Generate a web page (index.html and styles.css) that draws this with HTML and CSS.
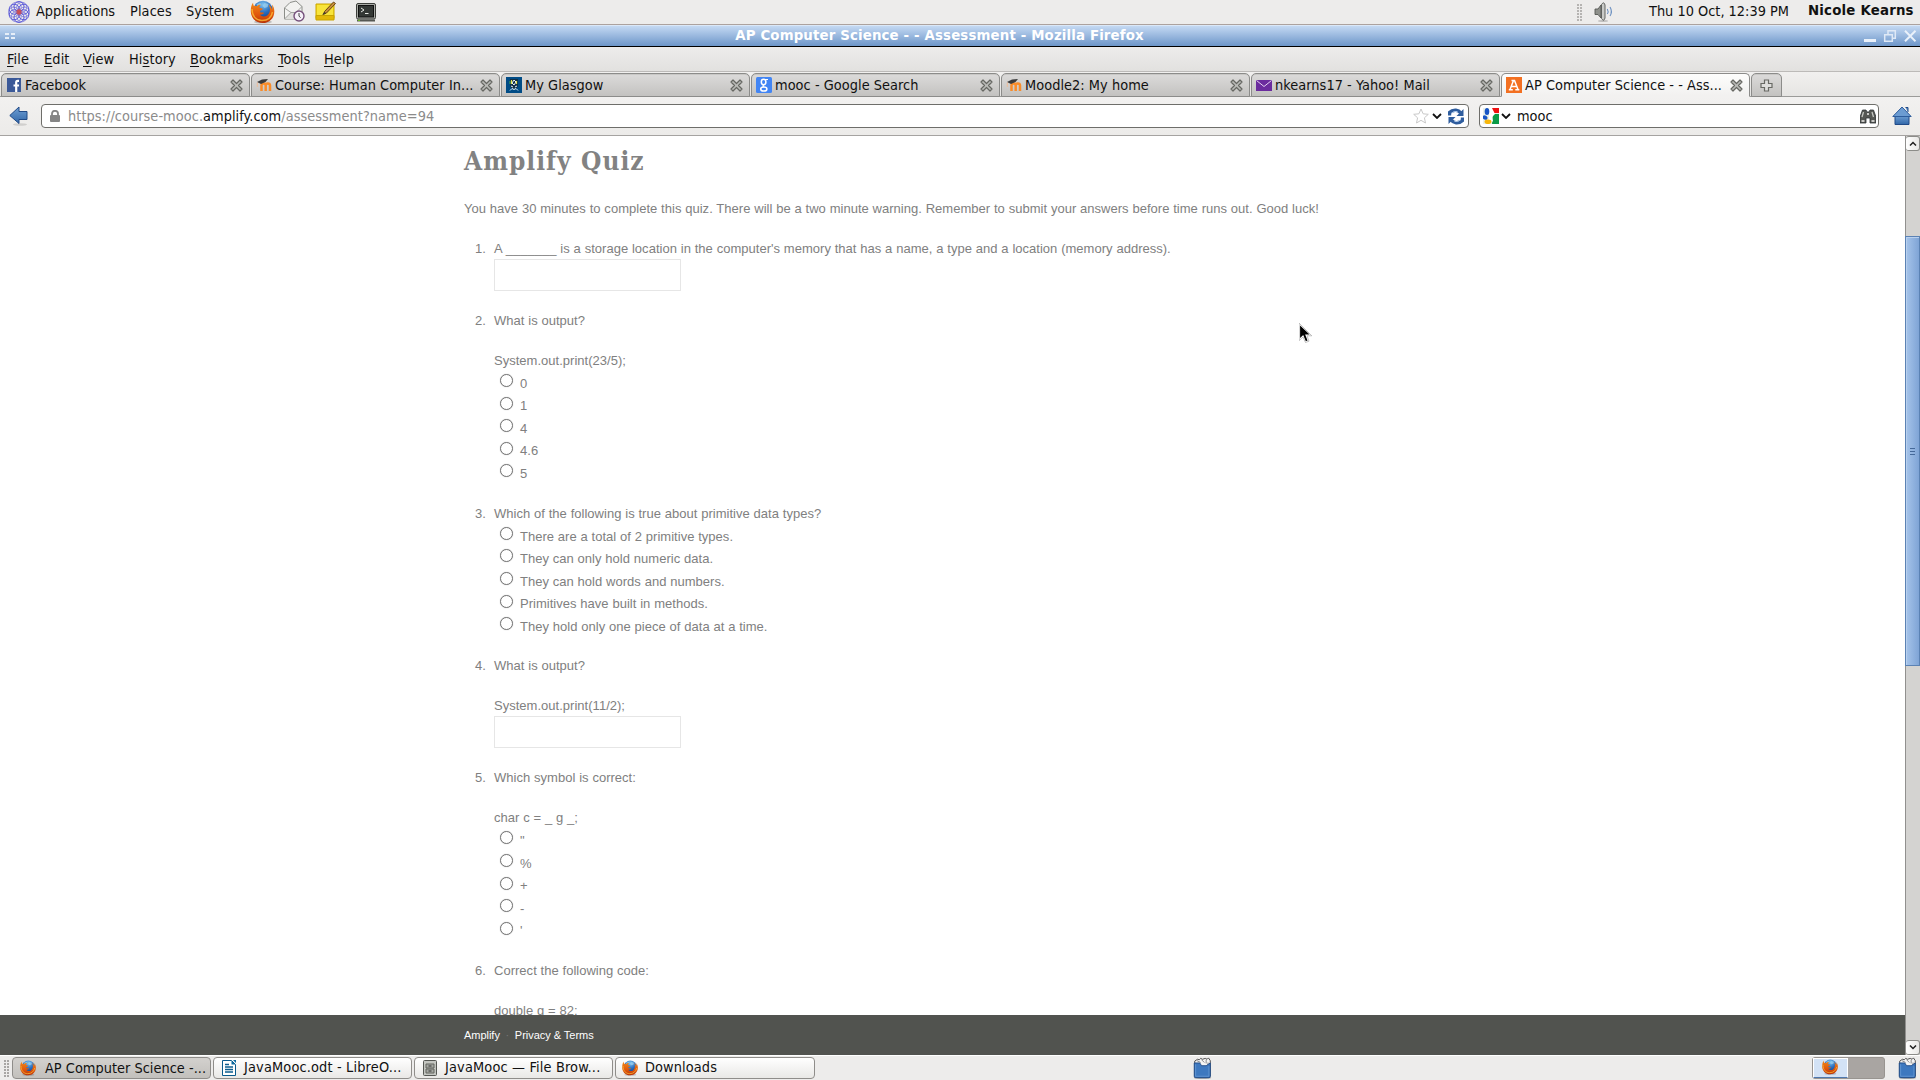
FILE: index.html
```
<!DOCTYPE html>
<html lang="en">
<head>
<meta charset="utf-8">
<title>AP Computer Science - - Assessment</title>
<link rel="stylesheet" href="styles.css">
</head>
<body>
<svg class="defs" width="0" height="0" aria-hidden="true">
  <defs>
    <linearGradient id="fox" x1="0" y1="0" x2="0" y2="1"><stop offset="0" stop-color="#f08a1c"/><stop offset=".6" stop-color="#e0560c"/><stop offset="1" stop-color="#b83208"/></linearGradient>
    <radialGradient id="globe" cx=".5" cy=".2" r=".8"><stop offset="0" stop-color="#7fc4f0"/><stop offset=".5" stop-color="#2b6fc0"/><stop offset="1" stop-color="#123a7e"/></radialGradient>
    <linearGradient id="blue" x1="0" y1="0" x2="0" y2="1"><stop offset="0" stop-color="#6f9fd4"/><stop offset="1" stop-color="#3167a8"/></linearGradient>
    <symbol id="firefox" viewBox="0 0 24 24">
      <ellipse cx="12.5" cy="22" rx="9" ry="1.6" fill="#000" opacity=".2"/>
      <circle cx="12.5" cy="10.5" r="9.8" fill="url(#globe)"/>
      <path d="M14 3l4 1-1 3-3 1-2-2zM6 4l4-1 1 2-4 2z" fill="#9fd2ee" opacity=".7"/>
      <path d="M2.6 2.4C.6 5 .2 8.600.3 12c.4 6 5 11 11.800 11C19 23 24 18 23.800 11c-.1-2.800-1-5-2.400-6.600.5 2 .5 3.600.1 5C20.800 7 19.600 5.200 18.200 4.400c2 4 1.600 8.600-1.200 10.800-2.600 2-6 1.600-7.800-.6 1.600.4 2.800-.1 4-1 .6-.5.2-1.200-.6-1.100-1.400.2-2.400.2-3.200-.8.1-.9.800-1.300 2.300-1.900.4-.2.500-1.400-.1-1.500-1.500-.1-2.400-.5-2.800-1.300.3-1 1-1.700 1.900-2.200C8.600 4.400 7.200 5 6 6.200 5.200 5.800 4.400 5.600 3.400 5.900 2.700 5 2.500 3.800 2.600 2.400z" fill="url(#fox)"/>
      <path d="M1.500 9c0 7 4 11.500 10 11.500 5.500 0 9.500-3 10.500-8.500" fill="none" stroke="#ffc43a" stroke-width="1.400" opacity=".75"/>
    </symbol>
    <symbol id="x" viewBox="0 0 13 13">
      <path d="M1 3l2-2 3.500 3.500L10 1l2 2-3.500 3.500L12 10l-2 2-3.500-3.500L3 12l-2-2 3.500-3.500z" fill="#b9bab7" stroke="#676863" stroke-width="1.200" stroke-linejoin="round"/>
    </symbol>
    <symbol id="chev" viewBox="0 0 10 6"><path d="M1 1l4 4 4-4" fill="none" stroke="#111" stroke-width="1.800"/></symbol>
    <symbol id="moodle" viewBox="0 0 16 16">
      <path d="M5.500 14V8.500c0-2.800 4.200-2.800 4.200 0V14M9.700 8.500c0-2.800 4.300-2.800 4.300 0V14" fill="none" stroke="#f98c29" stroke-width="2.500"/>
      <path d="M1 5l5-2.500L12 2 9.500 5 5 7z" fill="#3a3a3a"/><path d="M1.300 5.500V10" stroke="#f9b98a" stroke-width=".8"/>
    </symbol>
    <symbol id="tray" viewBox="0 0 20 24">
      <ellipse cx="10" cy="22.500" rx="9.500" ry="1.300" fill="#555" opacity=".6"/>
      <path d="M1.500 21V4.500l3-2 2 .5 1.500-1.500 2 1 3-1 2 1 1.500-1.500L18.500 4v17z" fill="#f4f4f4" stroke="#444" stroke-width="1"/>
      <path d="M4 4l4 2M9 3l3 3M14 3v4M16 6v5" stroke="#666" stroke-width=".8"/>
      <path d="M1 6.500h6l2 3h5l4.500-3V21q0 1.500-1.500 1.500H2.500Q1 22.500 1 21z" fill="#3d78bf" stroke="#204a87"/>
      <path d="M2.500 8v13h14.500V10" fill="none" stroke="#6a9cd6" stroke-width=".8"/>
    </symbol>
  </defs>
</svg>

<header class="panel">
  <svg class="p-logo" viewBox="0 0 24 24" fill="none" stroke="#4d4bd6" stroke-width=".9">
    <g id="petals"><circle cx="12" cy="6.500" r="5"/><circle cx="16.800" cy="9.200" r="5"/><circle cx="16.800" cy="14.800" r="5"/><circle cx="12" cy="17.500" r="5"/><circle cx="7.200" cy="14.800" r="5"/><circle cx="7.200" cy="9.200" r="5"/></g>
    <use href="#petals" transform="rotate(30 12 12)" opacity=".6"/>
    <path d="M12 8.800v6.400M8.800 12h6.400M9.800 9.800l4.400 4.400M14.200 9.800l-4.400 4.400" stroke="#d05050" stroke-width="1.200"/>
  </svg>
  <span class="p-item p-apps">Applications</span>
  <span class="p-item p-places">Places</span>
  <span class="p-item p-system">System</span>
  <svg class="p-fox"><use href="#firefox"/></svg>
  <svg class="p-mail" viewBox="0 0 22 23">
    <path d="M1.500 8L7 2.500 13 1l6 5.500V19H1.500z" fill="#f2f2f0" stroke="#8b8d88"/>
    <path d="M1.500 19L8 12.500h5L19 19M1.500 8L8 12.500M19 6.500l-6 6" fill="#dfdfdc" stroke="#9a9b97" stroke-width=".9"/>
    <circle cx="16" cy="16" r="5" fill="#f5f0f8" stroke="#75507b" stroke-width="1.400"/>
    <path d="M16 13v3.200l1.600 1.400" fill="none" stroke="#444"/>
  </svg>
  <svg class="p-note" viewBox="0 0 22 21">
    <path d="M1 3h18v14.500H1z" fill="#f6dc1e" stroke="#c9a400"/><path d="M1 14.500h18V19H1z" fill="#e3b808" stroke="#c9a400"/>
    <path d="M2 4h16v10H2z" fill="#fae94e" opacity=".6"/>
    <path d="M8.500 13.500l1-3L18.500 1l2 1.500L11.500 12z" fill="#c98f3c" stroke="#5c3a10" stroke-width=".9"/>
    <path d="M7 14l2.500-3 1.500 1z" fill="#333"/>
  </svg>
  <svg class="p-term" viewBox="0 0 20 19">
    <rect x=".5" y=".5" width="19" height="15.500" rx="1.500" fill="#a9aba6" stroke="#3c3e3a"/>
    <rect x="2.500" y="2.500" width="15" height="11.500" fill="#343835" stroke="#111"/>
    <path d="M5 5l3 2-3 2M9 10.500h3.500" fill="none" stroke="#e8eae6"/>
    <path d="M1 16.500h18v2H1z" fill="#555753"/><path d="M2 17.300h2" stroke="#73d216"/>
  </svg>
  <span class="grip p-grip"></span>
  <svg class="p-vol" viewBox="0 0 20 20">
    <path d="M1 7h3l3-4v13l-3-3.500H1z" fill="#8e908b" stroke="#555753" stroke-width=".9"/>
    <path d="M7.500 2.500Q10-1 11 3v13q-1 4-3.500.5z" fill="#c9cac7" stroke="#555753" stroke-width=".9"/>
    <path d="M13.300 7q1.600 2.600 0 5M16 5q2.800 4.500 0 9" fill="none" stroke="#6a8fc0" stroke-width="1.100"/>
    <ellipse cx="9" cy="19" rx="5" ry=".9" fill="#000" opacity=".2"/>
  </svg>
  <span class="p-item p-clock">Thu 10 Oct, 12:39 PM</span>
  <span class="p-item p-user">Nicole Kearns</span>
</header>

<div class="titlebar">
  <svg class="tb-dots" viewBox="0 0 10 6"><path d="M0 1h4M6 1h4M0 5h4M6 5h4" stroke="#e6eef8" stroke-width="2"/></svg>
  <h1 class="tb-title">AP Computer Science - - Assessment - Mozilla Firefox</h1>
  <svg class="tb-btns" viewBox="0 0 52 13">
    <path d="M0 10.500h12" stroke="#eaf1fa" stroke-width="3"/>
    <path d="M20.700 4.700h7.600v6.600h-7.600zM24 4V.8h7.300v7.400H29" fill="none" stroke="#dfe9f6" stroke-width="1.500"/>
    <path d="M41 .8l10.500 10.500M51.500.8L41 11.300" stroke="#eaf1fa" stroke-width="2"/>
  </svg>
</div>

<nav class="menubar">
  <span class="m1"><u>F</u>ile</span><span class="m2"><u>E</u>dit</span><span class="m3"><u>V</u>iew</span><span class="m4">Hi<u>s</u>tory</span><span class="m5"><u>B</u>ookmarks</span><span class="m6"><u>T</u>ools</span><span class="m7"><u>H</u>elp</span>
</nav>

<div class="tabs">
  <div class="tab first">
    <svg class="fav fav14" viewBox="0 0 14 14"><path fill="#3b5998" d="M0 0h14v14H0z"/><path d="M12 2.800h-1.300q-1.500 0-1.500 1.600V14M6.500 7.500H12" fill="none" stroke="#fff" stroke-width="2.200"/></svg>
    <span class="tab-t">Facebook</span><svg class="close"><use href="#x"/></svg>
  </div>
  <div class="tab">
    <svg class="fav"><use href="#moodle"/></svg>
    <span class="tab-t">Course: Human Computer In...</span><svg class="close"><use href="#x"/></svg>
  </div>
  <div class="tab">
    <svg class="fav" viewBox="0 0 16 16"><path fill="#004c86" d="M0 0h16v16H0z"/><path d="M4 2h8v6q0 3-4 4-4-1-4-4z" fill="#123047"/><path d="M5.500 3v4M10.500 4v3" stroke="#e6e04a" stroke-width="1.200"/><path d="M4 4v3" stroke="#4aa84a"/><path d="M8 3l2 2-2 3-2-2zM4 13.500l2-2 2 1 2-1 2 2M5 9l2 1M9 10l2-1" fill="none" stroke="#e8f2fa"/></svg>
    <span class="tab-t">My Glasgow</span><svg class="close"><use href="#x"/></svg>
  </div>
  <div class="tab">
    <svg class="fav" viewBox="0 0 16 16"><rect width="16" height="16" rx="1.500" fill="#4285f4"/><g fill="none" stroke="#fff"><ellipse cx="7.600" cy="5" rx="2.300" ry="2.700" stroke-width="1.500"/><path d="M9 2.500h3M8 8q-2 1-.3 2" stroke-width="1.200"/><ellipse cx="7.800" cy="12" rx="3.100" ry="2.100" stroke-width="1.500"/></g></svg>
    <span class="tab-t">mooc - Google Search</span><svg class="close"><use href="#x"/></svg>
  </div>
  <div class="tab">
    <svg class="fav"><use href="#moodle"/></svg>
    <span class="tab-t">Moodle2: My home</span><svg class="close"><use href="#x"/></svg>
  </div>
  <div class="tab">
    <svg class="fav" viewBox="0 0 16 16"><path fill="#6b2c9e" d="M0 3h16v11H0z"/><path d="M.5 3.500L8 9.500l7.500-6" fill="none" stroke="#e3d0f0"/></svg>
    <span class="tab-t">nkearns17 - Yahoo! Mail</span><svg class="close"><use href="#x"/></svg>
  </div>
  <div class="tab active">
    <svg class="fav" viewBox="0 0 16 16"><path fill="#f37021" d="M0 0h16v16H0z"/><path d="M4 12.500L7.500 3.500h1L12 12.500M5.500 9.500h5M5.500 3.500H9M2.800 12.700h4M9.300 12.700h4" fill="none" stroke="#fff" stroke-width="1.500"/></svg>
    <span class="tab-t">AP Computer Science - - Ass...</span><svg class="close"><use href="#x"/></svg>
  </div>
  <div class="tab new">
    <svg class="plus" viewBox="0 0 13 13"><path d="M4.500 1h4v3.500H12v4H8.500V12h-4V8.500H1v-4h3.500z" fill="#dededc" stroke="#686964" stroke-width="1.200"/></svg>
  </div>
</div>

<div class="toolbar">
  <svg class="back" viewBox="0 0 20 20"><ellipse cx="11" cy="18.500" rx="7" ry="1.300" fill="#000" opacity=".12"/><path d="M.8 9.500L10 1v4.500h8v8h-8V17.500z" fill="url(#blue)" stroke="#204a87" stroke-linejoin="round"/></svg>
  <div class="field url">
    <svg class="lock" viewBox="0 0 10 12"><path d="M2 6V3.800q0-3 3-3t3 3V6" fill="none" stroke="#858585" stroke-width="1.800"/><rect y="5" width="10" height="7" rx="1" fill="#858585"/></svg>
    <span class="url-t">https://course-mooc.<b>amplify.com</b>/assessment?name=94</span>
    <svg class="star" viewBox="0 0 16 16"><path d="M8 1l2.100 4.800 5.200.5-3.900 3.500 1.100 5.200L8 12.300 3.500 15l1.100-5.200L.7 6.300l5.200-.5z" fill="#fff" stroke="#c9c9c9"/></svg>
    <svg class="chev"><use href="#chev"/></svg>
    <svg class="reload" viewBox="0 0 16 17"><g fill="none" stroke="#2f5d9e" stroke-width="3.400"><path d="M1.500 7.500V4.500Q4 2 8 2.300q3 .2 4.500 2.400"/><path d="M14.500 9.500v3q-2.500 2.500-6.500 2.200-3-.2-4.500-2.400"/></g><path d="M15.500 1v7H8.500zM.5 16V9h7z" fill="#2f5d9e"/><path d="M3 5.500Q6 2.500 9.500 3.500M13 11.500Q10 14.500 6.500 13.500" fill="none" stroke="#a8c4e6"/></svg>
  </div>
  <div class="field search">
    <svg class="goog" viewBox="0 0 16 16"><path fill="#e8f0e8" d="M0 0h16v16H0z"/><path fill="#e11" d="M8 0h8v5H9z"/><path fill="#0a9b47" d="M10 6h6v10H9z"/><path fill="#fff" d="M6 0h3l3 6-3 3 1 4-3 3H5l1-6z"/><ellipse cx="4" cy="3.500" rx="2.300" ry="3.500" fill="#1755c5"/><ellipse cx="2.300" cy="9.500" rx="2.600" ry="2" fill="#1755c5" transform="rotate(30 2 9)"/><ellipse cx="5" cy="13.800" rx="3.500" ry="2.300" fill="#f8b60a"/></svg>
    <svg class="chev"><use href="#chev"/></svg>
    <span class="s-t">mooc</span>
    <svg class="bino" viewBox="0 0 16 15"><path d="M2.500 1h3.500l1 2h2l1-2h3.500L16 8v6h-6V9H6v5H0V8z" fill="#555753" stroke="#2e3436" stroke-width=".8"/><path d="M3.500 3L2 8M12 3l1.500 5" stroke="#c6c8c3" stroke-width="1.300"/><path d="M1.500 12h3M11.500 12h3M7 5h2" stroke="#eeeeec" stroke-width="1.600"/></svg>
  </div>
  <svg class="home" viewBox="0 0 20 20"><path d="M3 9.500V18.500h14V9.500" fill="url(#blue)" stroke="#204a87"/><path d="M13.500 1.500h2.500V6" fill="#5b8cc6" stroke="#204a87"/><path d="M.8 10.500L10 1l9.200 9.500z" fill="#6c9cd2" stroke="#2d5c9c" stroke-linejoin="round"/></svg>
</div>

<main class="view">
  <div class="page">
    <section class="quiz">
      <h2>Amplify Quiz</h2>
      <p class="intro">You have 30 minutes to complete this quiz. There will be a two minute warning. Remember to submit your answers before time runs out. Good luck!</p>
      <ol>
        <li>A _______ is a storage location in the computer's memory that has a name, a type and a location (memory address).
          <input type="text" class="answer"></li>
        <li>What is output?<p class="code">System.out.print(23/5);</p>
          <label><i class="radio"></i>0</label><label><i class="radio"></i>1</label><label><i class="radio"></i>4</label><label><i class="radio"></i>4.6</label><label><i class="radio"></i>5</label></li>
        <li>Which of the following is true about primitive data types?
          <label><i class="radio"></i>There are a total of 2 primitive types.</label><label><i class="radio"></i>They can only hold numeric data.</label><label><i class="radio"></i>They can hold words and numbers.</label><label><i class="radio"></i>Primitives have built in methods.</label><label><i class="radio"></i>They hold only one piece of data at a time.</label></li>
        <li>What is output?<p class="code">System.out.print(11/2);</p>
          <input type="text" class="answer"></li>
        <li>Which symbol is correct:<p class="code">char c = _ g _;</p>
          <label><i class="radio"></i>"</label><label><i class="radio"></i>%</label><label><i class="radio"></i>+</label><label><i class="radio"></i>-</label><label><i class="radio"></i>'</label></li>
        <li>Correct the following code:<p class="code">double g = 82;</p></li>
      </ol>
    </section>
    <footer class="foot"><span>Amplify</span><span class="dot">·</span><span>Privacy &amp; Terms</span></footer>
  </div>
  <div class="scroll">
    <div class="sbtn"><svg viewBox="0 0 8 5"><path d="M1 4.500l3-3 3 3" fill="none" stroke="#222" stroke-width="1.500"/></svg></div>
    <div class="track"><div class="thumb"><i></i><i></i><i></i></div></div>
    <div class="sbtn"><svg viewBox="0 0 8 5"><path d="M1 .5l3 3 3-3" fill="none" stroke="#222" stroke-width="1.500"/></svg></div>
  </div>
  <svg class="cursor" viewBox="0 0 13 20"><path d="M.5 1v15.500L4 13l2.500 6 2.800-1.200L7 12h5z" fill="#000" stroke="#fff" stroke-width="1.200"/><path d="M.2.200v17.300L4 14l2.500 5.500 3.500-1.300L8 12.800h4.800z" fill="none" stroke="#888" stroke-width=".5"/></svg>
</main>

<footer class="taskbar">
  <span class="grip t-grip"></span>
  <div class="task on"><svg class="ti"><use href="#firefox"/></svg><span>AP Computer Science -...</span></div>
  <div class="task"><svg class="ti" viewBox="0 0 16 16"><path d="M1.500.500h9l4 4v11h-13z" fill="#fff" stroke="#0a5a8c"/><path d="M10.500.500v4h4zM12 0h3v3z" fill="#0a6aa0"/><path d="M4 4.500h4M4 7h8M4 9.500h8M4 12h8" stroke="#0d5d8f" stroke-width="1.300"/></svg><span>JavaMooc.odt - LibreO...</span></div>
  <div class="task"><svg class="ti" viewBox="0 0 16 16"><rect x="1.500" y=".5" width="13" height="15" rx="1" fill="#c3c5c0" stroke="#555753"/><path d="M4 4h8v4H4zM4 9h8v4H4z" fill="#a5a7a2" stroke="#62645f"/><path d="M6.500 6h3M6.500 11h3" stroke="#333"/></svg><span>JavaMooc — File Brow...</span></div>
  <div class="task last"><svg class="ti"><use href="#firefox"/></svg><span>Downloads</span></div>
  <svg class="tray tray1"><use href="#tray"/></svg>
  <div class="pager"><div class="ws"><svg><use href="#firefox"/></svg></div></div>
  <svg class="tray"><use href="#tray"/></svg>
</footer>
</body>
</html>
```

FILE: styles.css
```
* { box-sizing: border-box; }
body { margin: 0; width: 1920px; height: 1080px; overflow: hidden; background: #edeceb; color: #111; display: flex; flex-direction: column; font: 14.4px/20px "DejaVu Sans Condensed", "DejaVu Sans", sans-serif; }
.defs { position: absolute; }
svg { display: block; flex: none; }
span { white-space: nowrap; }

/* Top panel */
.panel { height: 25px; flex: none; border-bottom: 1px solid #aca29e; display: flex; align-items: flex-start; padding-left: 7px; background: #edeceb; }
.p-logo { width: 24px; height: 24px; margin-right: 5px; }
.p-item { line-height: 22px; }
.p-apps { width: 94px; }
.p-places { width: 56px; letter-spacing: .1px; }
.p-system { width: 64px; }
.p-fox { width: 25px; height: 24px; margin-right: 8px; }
.p-mail { width: 22px; height: 23px; margin-right: 10px; }
.p-note { width: 22px; height: 21px; margin-right: 19px; margin-top: 1px; }
.p-term { width: 20px; height: 19px; margin-top: 3px; }
.grip { width: 5px; background: radial-gradient(circle at 1px 1px, #a8a6a4 .9px, transparent 1px) 0 0 / 3px 3px; }
.p-grip { height: 17px; margin: 4px 12px 0 auto; opacity: .8; }
.p-vol { width: 20px; height: 20px; margin-top: 2px; margin-right: 35px; }
.p-clock { width: 159px; }
.p-user { width: 112px; font: bold 13.33px/22px "DejaVu Sans", sans-serif; letter-spacing: .2px; }

/* Window title bar */
.titlebar { height: 22px; flex: none; border-top: 1px solid #dbe8f8; border-bottom: 1px solid #000; background: linear-gradient(#c4d9f3, #6d96c9); display: grid; grid-template-columns: 60px 1fr 60px; align-items: center; }
.tb-dots { width: 10px; height: 6px; margin-left: 5px; }
.tb-title { margin: -1px 0 0; padding-right: 41px; text-align: center; color: #fff; font: bold 13.33px/20px "DejaVu Sans", sans-serif; letter-spacing: .15px; }
.tb-btns { width: 52px; height: 13px; margin-left: 4px; }

/* Menu bar */
.menubar { height: 25px; flex: none; background: linear-gradient(#edeceb, #e2e1df); border-bottom: 1px solid #bcbab8; display: flex; padding-left: 7px; line-height: 24px; }
.menubar u { text-decoration-thickness: 1px; text-underline-offset: 2px; }
.menubar span { letter-spacing: .12px; }
.m1 { width: 37px; } .m2 { width: 39px; } .m3 { width: 46px; } .m4 { width: 61px; } .m5 { width: 88px; } .m6 { width: 46px; }

/* Tabs */
.tabs { height: 25px; flex: none; display: flex; gap: 1px; padding: 1px 0 0 1px; background: linear-gradient(#f1f0ef, #e6e5e3); border-bottom: 1px solid #9b9b99; }
.tab { width: 249px; height: 24px; border: 1px solid #8c8c8a; border-radius: 5px 5px 0 0; background: linear-gradient(#dcdbda, #c3c2c0); box-shadow: inset 0 1px #c9c8c6; display: flex; align-items: center; padding: 0 6px 0 4px; }
.tab.first { padding-left: 5px; }
.fav { width: 16px; height: 16px; margin-right: 3px; }
.fav14 { width: 14px; height: 14px; margin-right: 4px; }
.tab-t { flex: 1; line-height: 22px; letter-spacing: .04px; }
.close { width: 13px; height: 13px; }
.tab.active { background: linear-gradient(#fdfdfc, #f2f1f0); border-bottom-color: #f2f1f0; box-shadow: none; }
.tab.new { width: 31px; padding: 0; justify-content: center; }
.plus { width: 13px; height: 13px; }

/* Navigation toolbar */
.toolbar { height: 39px; flex: none; background: linear-gradient(#f2f1f0, #ecebe9); border-bottom: 1px solid #a5a3a1; display: flex; align-items: flex-start; padding: 7px 0 0 9px; }
.back { width: 20px; height: 20px; margin: 2px 12px 0 0; }
.field { height: 24px; border: 1px solid #6e6e6a; border-radius: 4px; background: #fff; display: flex; align-items: center; }
.url { width: 1428px; margin-right: 10px; padding: 0 4px 0 8px; }
.lock { width: 10px; height: 12px; margin-right: 8px; }
.url-t { flex: 1; color: #8b8b8b; letter-spacing: .05px; }
.url-t b { font-weight: normal; color: #111; }
.star { width: 16px; height: 16px; margin-right: 3px; }
.chev { width: 10px; height: 6px; }
.reload { width: 16px; height: 17px; margin-left: 6px; }
.search { width: 400px; padding: 0 2px 0 3px; }
.goog { width: 16px; height: 16px; margin-right: 2px; }
.s-t { flex: 1; margin-left: 6px; }
.bino { width: 16px; height: 15px; }
.home { width: 20px; height: 20px; margin: 2px 0 0 13px; }

/* Page viewport */
.view { flex: 1; min-height: 0; display: flex; position: relative; background: #fff; }
.page { flex: 1; display: flex; flex-direction: column; background: #fff; font: 13px/20px "Liberation Sans", Arial, sans-serif; letter-spacing: .02px; word-spacing: .18px; color: #808080; }
.quiz { flex: 1; min-height: 0; overflow: hidden; padding: 7px 0 0 464px; }
.quiz h2 { margin: 0 0 20px; font: bold 26px/36px "DejaVu Serif Condensed", "DejaVu Serif", serif; letter-spacing: 1px; color: #828282; }
.intro { margin: 0 0 20px; }
.quiz ol { margin: 0; padding: 0 0 0 30px; counter-reset: q; list-style: none; }
.quiz li { margin-bottom: 20px; counter-increment: q; }
.quiz li::before { content: counter(q) "."; float: left; width: 26px; margin-left: -34px; text-align: right; }
.code { margin: 20px 0 0; }
.quiz label { display: flex; height: 22.550px; line-height: 26px; }
.radio { width: 13px; height: 13px; margin: 3.400px 7px 0 6px; border: 1.500px solid #777; border-radius: 50%; background: #fff; box-shadow: 0 0 1px #aaa; flex: none; }
.answer { display: block; width: 187px; height: 32px; border: 1px solid #e6e6e6; background: #fff; padding: 0; margin: -.2px 0 .2px; }
.foot { height: 40px; flex: none; background: #51534f; color: #fff; font-size: 11px; line-height: 40px; padding-left: 464px; display: flex; letter-spacing: -.03px; word-spacing: 0; }
.dot { width: 15px; text-align: center; color: #777; }

/* Scrollbar */
.scroll { width: 15px; display: flex; flex-direction: column; border-left: 1px solid #91908e; background: #d4d3d1; }
.sbtn { height: 15px; flex: none; background: linear-gradient(90deg, #fff, #e9e8e6); border: 1px solid #8c8c89; border-left: 0; border-radius: 3px; display: grid; place-items: center; }
.sbtn svg { width: 8px; height: 5px; }
.track { flex: 1; padding: 85px 0 0; }
.thumb { height: 430px; margin-left: -1px; border: 1px solid #5b82b4; background: linear-gradient(90deg, #a6c4ea, #7fa4d6); box-shadow: inset 1px 1px #b9d0ee; display: flex; flex-direction: column; align-items: center; justify-content: center; gap: 2px; }
.thumb i { width: 5px; height: 1px; background: #45699a; }
.cursor { position: absolute; left: 1299px; top: 187px; width: 13px; height: 20px; }

/* Bottom panel */
.taskbar { height: 25px; flex: none; background: #edeceb; border-top: 1px solid #fff; display: flex; align-items: flex-start; padding: 1px 2px 0 4px; }
.t-grip { height: 17px; margin: 3px 3px 0 0; }
.task { width: 199px; height: 22px; margin-right: 2px; border: 1px solid #8f8d8a; border-radius: 4px; background: linear-gradient(#fff, #e9e8e6); display: flex; align-items: flex-start; padding: 2px 0 0 7px; line-height: 15px; letter-spacing: .16px; }
.task.on { background: linear-gradient(#d3d1ce, #c2c0bc); line-height: 17px; letter-spacing: .02px; }
.task.on .ti { margin-right: 9px; }
.task.last { width: 200px; padding-left: 6px; letter-spacing: .1px; }
.ti { width: 16px; height: 16px; margin-right: 7px; }
.tray { width: 21px; height: 22px; }
.tray1 { margin-left: 375px; margin-right: auto; }
.pager { width: 73px; height: 22px; margin-right: 12px; background: #a9a5a2; border: 1px solid #989490; border-radius: 3px; display: flex; }
.ws { width: 35px; height: 20px; background: #d3e2f5; border: 1px solid #fff; border-bottom: 1px solid #4f78ae; padding: 0 0 0 8px; }
.ws svg { width: 16px; height: 16px; }
```
